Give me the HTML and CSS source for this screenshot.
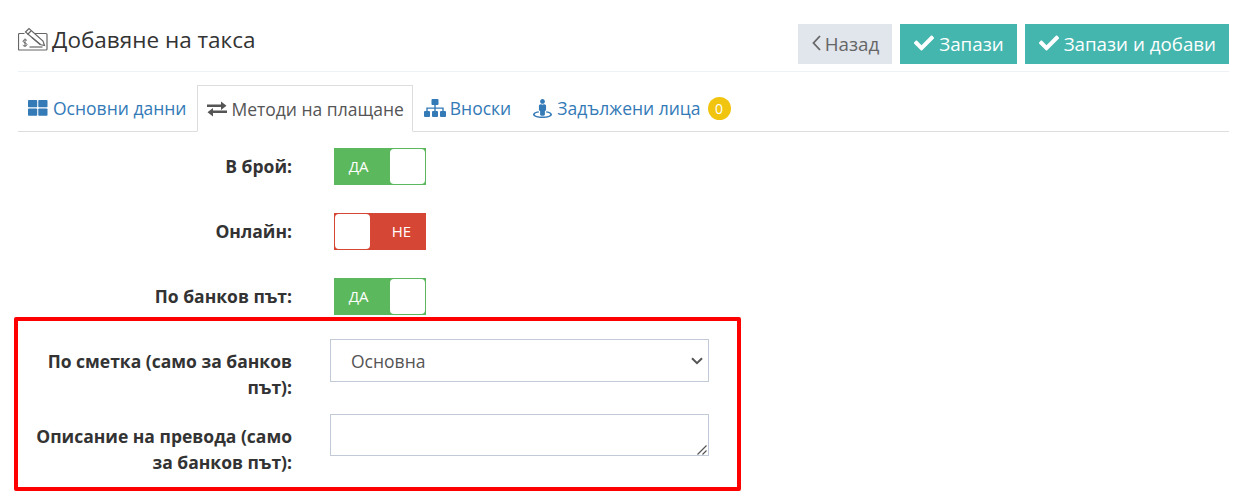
FILE: index.html
```html
<!DOCTYPE html>
<html lang="bg">
<head>
<meta charset="utf-8">
<title>Добавяне на такса</title>
<link rel="stylesheet" href="styles.css">
</head>
<body>
<main class="page">
  <header class="page-head">
    <h1 class="title">
      <svg class="title-icon" viewBox="0 0 30 24" width="30" height="24" fill="none" stroke="#666" stroke-width="1.2">
        <path d="M6.500 6.500H1.500a1 1 0 0 0-1 1v14.500a1 1 0 0 0 1 1h26.500a1 1 0 0 0 1-1V7.500a1 1 0 0 0-1-1H16"/>
        <path d="M7.500 5 11 1.500l14 12.500 1.500 4.500-4.500-1z" fill="#fff"/>
        <path d="M9.500 7.500 13 4M14 10.500l8.500 7"/>
        <path d="M11.500 20h13"/>
        <path d="M9 13.500C8.500 12.500 5 12.400 5 14.200s4 1.600 4 3.400-3.500 1.700-4.200.6M7 11.500v8.500" stroke-width="1"/>
      </svg>
      Добавяне на такса
    </h1>
    <div class="actions">
      <a class="btn btn-back" href="#">
        <svg class="chev" viewBox="0 0 9 16" width="9" height="16" fill="none" stroke="#666" stroke-width="1.8"><path d="M8 1 1.500 8 8 15"/></svg>
        Назад
      </a>
      <a class="btn btn-save" href="#">
        <svg class="check" viewBox="0 0 512 512" width="20" height="20" fill="#fff"><path d="M173.898 439.404l-166.4-166.4c-9.997-9.997-9.997-26.206 0-36.204l36.203-36.204c9.997-9.998 26.207-9.998 36.204 0L192 312.69 432.095 72.596c9.997-9.997 26.207-9.997 36.204 0l36.203 36.204c9.997 9.997 9.997 26.206 0 36.204l-294.4 294.401c-9.998 9.997-26.207 9.997-36.204-.001z"/></svg>
        Запази
      </a>
      <a class="btn btn-save" href="#">
        <svg class="check" viewBox="0 0 512 512" width="20" height="20" fill="#fff"><path d="M173.898 439.404l-166.4-166.4c-9.997-9.997-9.997-26.206 0-36.204l36.203-36.204c9.997-9.998 26.207-9.998 36.204 0L192 312.69 432.095 72.596c9.997-9.997 26.207-9.997 36.204 0l36.203 36.204c9.997 9.997 9.997 26.206 0 36.204l-294.4 294.401c-9.998 9.997-26.207 9.997-36.204-.001z"/></svg>
        Запази и добави
      </a>
    </div>
  </header>

  <nav class="tabs">
    <a class="tab" href="#">
      <svg viewBox="0 0 20 16" width="20" height="16" fill="#337ab7"><rect x="0" y="0" width="9.200" height="7.300" rx=".8"/><rect x="10.300" y="0" width="9.200" height="7.300" rx=".8"/><rect x="0" y="8.500" width="9.200" height="7.300" rx=".8"/><rect x="10.300" y="8.500" width="9.200" height="7.300" rx=".8"/></svg>
      Основни данни
    </a>
    <a class="tab tab-active" href="#">
      <svg viewBox="0 0 20 16" width="20" height="16" fill="#555"><path d="M0 3.500h14V.5l5.500 4.200L14 9V6H0zM20 9.500H6V7L.5 11.300 6 15.500V12h14z"/></svg>
      Методи на плащане
    </a>
    <a class="tab tab-tight" href="#">
      <svg viewBox="0 0 22 18" width="22" height="18" fill="#337ab7"><rect x="7.500" y="0" width="7" height="6" rx="1"/><rect x="0" y="12" width="6" height="6" rx="1"/><rect x="8" y="12" width="6" height="6" rx="1"/><rect x="16" y="12" width="6" height="6" rx="1"/><path d="M10.300 6h1.400v2.500H19.700V12h-1.400V9.700h-6.600V12h-1.400V9.700H3.700V12H2.300V8.500h8z"/></svg>
      Вноски
    </a>
    <a class="tab" href="#">
      <svg viewBox="0 0 512 512" width="19" height="19" fill="#337ab7"><path d="M367.900 329.760c-4.620 5.300-9.780 10.100-15.900 13.650v22.940c66.520 9.340 112 28.050 112 49.650 0 30.930-93.120 56-208 56S48 446.930 48 416c0-21.600 45.480-40.300 112-49.650v-22.940c-6.120-3.550-11.280-8.350-15.900-13.650C58.870 345.340 0 378.050 0 416c0 53.020 114.620 96 256 96s256-42.980 256-96c0-37.950-58.870-70.660-144.100-86.240zM256 128c35.350 0 64-28.650 64-64S291.350 0 256 0s-64 28.650-64 64 28.650 64 64 64zm-64 192v96c0 17.670 14.330 32 32 32h64c17.670 0 32-14.330 32-32v-96c17.670 0 32-14.330 32-32v-96c0-26.510-21.490-48-48-48h-11.800c-11.070 5.030-23.260 8-36.200 8s-25.130-2.970-36.200-8H208c-26.510 0-48 21.490-48 48v96c0 17.670 14.330 32 32 32z"/></svg>
      Задължени лица
      <span class="badge">0</span>
    </a>
  </nav>

  <form class="form">
    <div class="row row-switch">
      <label class="label">В брой:</label>
      <div class="switch switch-on"><span class="switch-text">ДА</span><span class="switch-handle"></span></div>
    </div>
    <div class="row row-switch">
      <label class="label">Онлайн:</label>
      <div class="switch switch-off"><span class="switch-handle"></span><span class="switch-text">НЕ</span></div>
    </div>
    <div class="row row-switch row-last-switch">
      <label class="label">По банков път:</label>
      <div class="switch switch-on"><span class="switch-text">ДА</span><span class="switch-handle"></span></div>
    </div>
    <div class="row row-select">
      <label class="label label-wide">По сметка (само за банков път):</label>
      <div class="control control-select">
        <select class="field field-select"><option>Основна</option></select>
        <svg class="select-arrow" viewBox="0 0 12 8" width="12" height="8" fill="none" stroke="#555" stroke-width="2"><path d="M1 1.200 6 6.200l5-5"/></svg>
      </div>
    </div>
    <div class="row">
      <label class="label label-wide">Описание на превода (само за банков път):</label>
      <div class="control control-area">
        <textarea class="field field-area"></textarea>
        <svg class="grip" viewBox="0 0 10 10" width="10" height="10" fill="none" stroke="#555" stroke-width="1.200"><path d="M.5 9.500 9.500.5M5.500 9.500l4-4"/></svg>
      </div>
    </div>
  </form>
  <div class="highlight"></div>
</main>
</body>
</html>
```
FILE: styles.css
```css
* { box-sizing: border-box; }
html, body { margin: 0; padding: 0; }
body {
  background: #fff;
  color: #333;
  font-family: "Open Sans", sans-serif;
  font-size: 17.5px;
  overflow: hidden;
}
.page {
  position: relative;
  width: 1229px;
  height: 504px;
  padding: 24px 0 0 18px;
}
.page-head {
  display: flex;
  justify-content: space-between;
  align-items: flex-start;
  height: 48px;
  border-bottom: 1px solid #eef1f5;
}
.title {
  display: flex;
  align-items: center;
  gap: 4px;
  margin: 0;
  height: 30px;
  font-size: 22.5px;
  font-weight: 400;
  color: #333;
}
.title-icon { flex: none; }
.actions { display: flex; gap: 8px; }
.btn {
  display: flex;
  align-items: center;
  gap: 5px;
  height: 40px;
  padding: 0 13px 2px 14px;
  font-size: 18.75px;
  text-decoration: none;
}
.btn-back { gap: 4px; background: #e1e5ec; color: #666; }
.btn-save { background: #44b6ae; color: #fff; }
.tabs {
  display: flex;
  align-items: flex-end;
  gap: 1px;
  height: 47px;
  margin-top: 13px;
  border-bottom: 1px solid #ddd;
}
.tab {
  display: flex;
  align-items: center;
  gap: 5px;
  height: 46px;
  padding: 0 10px;
  color: #337ab7;
  font-size: 17.5px;
  text-decoration: none;
}
.tab-tight { gap: 4px; padding-right: 11px; }
.tab-active {
  height: 47px;
  margin-bottom: -1px;
  padding: 0 8px 0 9px;
  gap: 4px;
  background: #fff;
  color: #555;
  border: 1px solid #ddd;
  border-bottom-color: #fff;
}
.badge {
  display: inline-flex;
  align-items: center;
  justify-content: center;
  width: 23px;
  height: 23px;
  margin-left: 2px;
  border-radius: 50%;
  background: #f1c40f;
  color: #fff;
  font-size: 14px;
}
.form { padding-top: 16px; }
.row { display: flex; }
.row-switch { height: 37px; margin-bottom: 28px; }
.row-last-switch { margin-bottom: 24px; }
.row-select { margin-bottom: 13px; height: 62px; }
.label {
  flex: none;
  width: 274px;
  padding: 5px 0 0 15px;
  font-size: 17.5px;
  font-weight: 700;
  line-height: 26px;
  text-align: right;
}
.label-wide { padding-top: 9px; }
.switch {
  display: flex;
  width: 92px;
  height: 37px;
  margin-left: 42px;
  border: 1px solid;
  font-size: 15px;
  color: #fff;
}
.switch-on { background: #5cb85c; border-color: #5cb85c; }
.switch-off { background: #d64635; border-color: #d64635; }
.switch-text {
  flex: 1;
  display: flex;
  align-items: center;
  justify-content: center;
  padding-bottom: 2px;
}
.switch-on .switch-text { padding-right: 8px; }
.switch-off .switch-text { padding-left: 8px; }
.switch-handle {
  flex: none;
  width: 35px;
  background: #fff;
  border-radius: 4px;
}
.control {
  position: relative;
  width: 379px;
  margin-left: 38px;
}
.control-select { height: 43px; }
.control-area { height: 42px; }
.field {
  display: block;
  width: 100%;
  height: 100%;
  background: #fff;
  border: 1px solid #c2cad8;
  border-radius: 0;
  color: #555;
  font-family: "Open Sans", sans-serif;
  font-size: 17.5px;
}
.field-select { appearance: none; padding: 0 30px 0 20px; }
.field-area { padding: 6px 16px; resize: none; }
.select-arrow {
  position: absolute;
  right: 6px;
  top: 18px;
  pointer-events: none;
}
.grip {
  position: absolute;
  right: 2px;
  bottom: 1px;
  pointer-events: none;
}
.highlight {
  position: absolute;
  left: 14px;
  top: 317px;
  width: 727px;
  height: 174px;
  border: 4px solid #f00;
  border-radius: 2px;
  pointer-events: none;
}
```
